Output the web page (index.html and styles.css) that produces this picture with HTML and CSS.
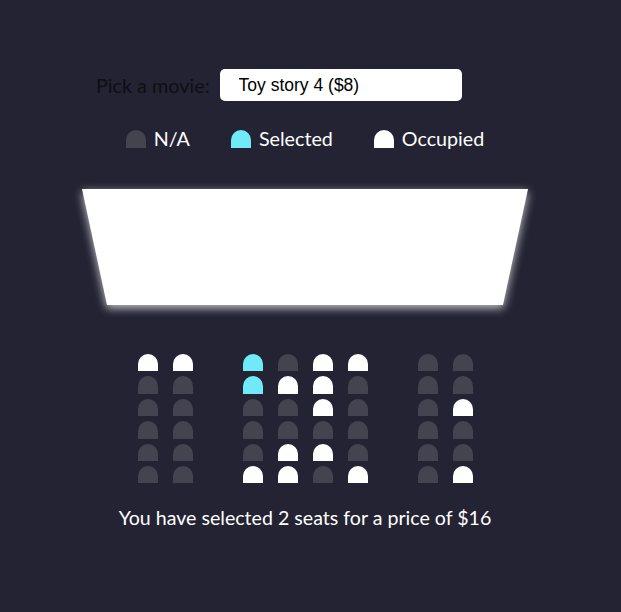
FILE: index.html
```html
<!DOCTYPE html>
<html>
<head>
<meta charset="utf-8">
<link rel="stylesheet" href="styles.css">
</head>
<body>
<div class="wrap">
  <div class="movie-row">
    <label class="movie-label">Pick a movie:</label>
    <select class="movie-select">
      <option>Toy story 4 ($8)</option>
    </select>
  </div>

  <ul class="legend">
    <li class="legend-item"><span class="seat"></span><small>N/A</small></li>
    <li class="legend-item"><span class="seat selected"></span><small>Selected</small></li>
    <li class="legend-item"><span class="seat occupied"></span><small>Occupied</small></li>
  </ul>

  <div class="screen-box">
    <svg class="screen" width="446" height="116" viewBox="0 0 446 116">
      <polygon points="0,0 446,0 421,116 25,116" fill="#ffffff"/>
    </svg>
  </div>

  <div class="seats">
    <div class="row">
      <span class="seat occupied"></span><span class="seat occupied"></span>
      <span class="seat selected"></span><span class="seat"></span><span class="seat occupied"></span><span class="seat occupied"></span>
      <span class="seat"></span><span class="seat"></span>
    </div>
    <div class="row">
      <span class="seat"></span><span class="seat"></span>
      <span class="seat selected"></span><span class="seat occupied"></span><span class="seat occupied"></span><span class="seat"></span>
      <span class="seat"></span><span class="seat"></span>
    </div>
    <div class="row">
      <span class="seat"></span><span class="seat"></span>
      <span class="seat"></span><span class="seat"></span><span class="seat occupied"></span><span class="seat"></span>
      <span class="seat"></span><span class="seat occupied"></span>
    </div>
    <div class="row">
      <span class="seat"></span><span class="seat"></span>
      <span class="seat"></span><span class="seat"></span><span class="seat"></span><span class="seat"></span>
      <span class="seat"></span><span class="seat"></span>
    </div>
    <div class="row">
      <span class="seat"></span><span class="seat"></span>
      <span class="seat"></span><span class="seat occupied"></span><span class="seat occupied"></span><span class="seat"></span>
      <span class="seat"></span><span class="seat"></span>
    </div>
    <div class="row">
      <span class="seat"></span><span class="seat"></span>
      <span class="seat occupied"></span><span class="seat occupied"></span><span class="seat"></span><span class="seat occupied"></span>
      <span class="seat"></span><span class="seat occupied"></span>
    </div>
  </div>

  <p class="summary">You have selected <span>2</span> seats for a price of $<span>16</span></p>
</div>
</body>
</html>
```

FILE: styles.css
```css
html, body {
  margin: 0;
  padding: 0;
}

body {
  background: #242333;
  font-family: Lato, "Open Sans", sans-serif;
  color: #ffffff;
  height: 612px;
  overflow: hidden;
}

.wrap {
  width: 446px;
  margin-left: 82px;
  display: flex;
  flex-direction: column;
  align-items: center;
}

.movie-row {
  align-self: flex-start;
  margin-top: 69px;
  margin-left: 14px;
  height: 32px;
  display: flex;
  align-items: center;
  gap: 10px;
}

.movie-label {
  font-size: 19.8px;
  color: #0e0e14;
}

.movie-select {
  appearance: none;
  -webkit-appearance: none;
  width: 242px;
  height: 32px;
  border: none;
  border-radius: 5px;
  background: #ffffff;
  color: #000000;
  font-family: "Liberation Sans", Arial, sans-serif;
  font-size: 17.5px;
  padding: 0 0 0 19px;
  margin: 0;
  outline: none;
}

.legend {
  list-style: none;
  margin: 29px 0 0 0;
  padding: 0;
  display: flex;
  gap: 41px;
  height: 18px;
}

.legend-item {
  display: flex;
  align-items: center;
  gap: 8px;
}

.legend-item small {
  font-size: 19.7px;
  line-height: 18px;
  color: #ffffff;
}

.seat {
  display: block;
  width: 20px;
  height: 17.4px;
  background: #444451;
  border-top-left-radius: 10px;
  border-top-right-radius: 10px;
}

.legend-item .seat {
  height: 18px;
}

.seat.selected {
  background: #6feaf6;
}

.seat.occupied {
  background: #ffffff;
}

.screen-box {
  margin-top: 41px;
  height: 116px;
}

.screen {
  display: block;
  overflow: visible;
  filter: drop-shadow(0 3px 5px rgba(255, 255, 255, 0.75));
}

.seats {
  margin-top: 49px;
  display: flex;
  flex-direction: column;
  gap: 5px;
}

.row {
  display: flex;
  gap: 15px;
}

.row .seat:nth-child(2),
.row .seat:nth-child(6) {
  margin-right: 35px;
}

.summary {
  margin: 23px 0 0 0;
  font-size: 19.6px;
  line-height: 24px;
  color: #ffffff;
}
```
